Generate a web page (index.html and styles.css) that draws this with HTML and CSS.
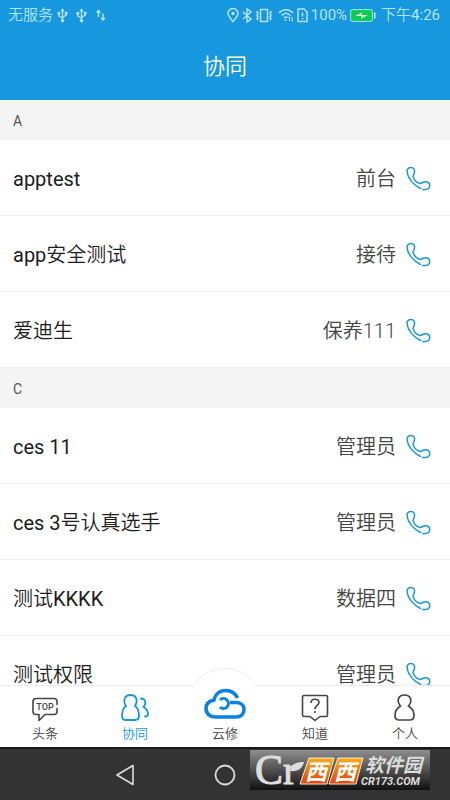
FILE: index.html
```html
<!DOCTYPE html>
<html lang="zh-CN">
<head>
<meta charset="utf-8">
<meta name="viewport" content="width=device-width, initial-scale=1">
<title>协同</title>
<link rel="stylesheet" href="styles.css">
</head>
<body>
<svg class="defs" aria-hidden="true">
  <symbol id="usb" viewBox="0 0 12 16"><g fill="none" stroke="currentColor" stroke-width="1.400"><path d="M6 13V3M6 11L2 8.500V6M6 10l4-2.500V5"/></g><g fill="currentColor"><path d="M6 0l2.500 3.500h-5z"/><circle cx="6" cy="13.800" r="1.900"/><circle cx="2" cy="5.500" r="1.700"/><path d="M8.500 4h3v3h-3z"/></g></symbol>
  <symbol id="phone" viewBox="0 0 26 26"><path d="M15.500 22.500C8.500 19 2.500 12 2 5.500C1.900 2.800 3.800 1.500 6 1.500C8.700 1.500 10 3.700 9.500 6.200C9 8.700 7.300 9.500 8.300 11.500C9.700 14.500 12 16.500 14.500 17.300C16.500 18 17.500 16 20 15.800C23 15.600 25 17.500 24.700 20C24.300 22.700 21.500 23.900 17.800 23.400" fill="none" stroke="currentColor" stroke-width="1.500" stroke-linecap="round"/></symbol>
</svg>

<header class="header">
  <div class="status">
    <span>无服务</span>
    <svg class="usb" width="11" height="15"><use href="#usb"/></svg>
    <svg class="usb" width="11" height="15"><use href="#usb"/></svg>
    <svg class="updown" width="10" height="13" viewBox="0 0 10 13" fill="none" stroke="currentColor" stroke-width="1.400"><path d="M2.500 8V1.500M.500 3.500l2-2 2 2M7 4.500V11M5 9l2 2 2-2"/></svg>
    <div class="status-right">
      <svg width="12" height="15" viewBox="0 0 12 15" fill="none" stroke="currentColor" stroke-width="1.500"><path d="M6 13.500C3 10 1 8 1 5.500a5 5 0 0 1 10 0C11 8 9 10 6 13.500z"/><circle cx="6" cy="5.500" r="1" fill="currentColor"/></svg>
      <svg width="10" height="15" viewBox="0 0 10 15" fill="none" stroke="currentColor" stroke-width="1.400"><path d="M1 4l8 7-4 3V1l4 3-8 7"/></svg>
      <svg width="18" height="15" viewBox="0 0 18 15" fill="none" stroke="currentColor" stroke-width="1.500"><path d="M5.500 1.500h7v12h-7zM3 3l-1 1.500 1 1.500-1 1.500L3 9l-1 1.500 1 1.500M15 3l1 1.500L15 6l1 1.500L15 9l1 1.500-1 1.500"/></svg>
      <svg class="wifi" width="16" height="14" viewBox="0 0 16 14" fill="none" stroke="currentColor" stroke-width="1.500"><path d="M1 5c4-4.500 10-4.500 14 0M3.500 7.500c3-3 6-3 9 0M6 10c1-1.300 2.500-1.300 3.500-.500"/><circle cx="7.500" cy="12" r="1" fill="currentColor" stroke="none"/><path d="M11.500 9v4M10.500 10l1-1.300M14 9v4M15 12l-1 1.300" stroke-width="1"/></svg>
      <svg width="11" height="15" viewBox="0 0 11 15" fill="none" stroke="currentColor" stroke-width="1.500"><path d="M1 1h6l3 3v9.500H1zM5.500 4.500v4M5.500 10v1.500"/></svg>
      <span>100%</span>
      <svg class="battery" width="26" height="13" viewBox="0 0 26 13"><rect x=".6" y=".6" width="21.800" height="11.800" rx="1.500" fill="#0ccb4d" stroke="#a5dff5"/><path d="M5 7l7-3.500-.7 2.500H18l-7 3.500.7-2.500z" fill="#eafff0"/><path d="M24 3.500h1.500v6H24z" fill="#c5eafa"/></svg>
      <span>下午4:26</span>
    </div>
  </div>
  <h1 class="title">协同</h1>
</header>

<main class="contacts">
  <section>
    <h2 class="letter">A</h2>
    <ul class="list">
      <li class="row"><span class="name">apptest</span><span class="role">前台</span><button class="call" aria-label="拨打 apptest"><svg width="26" height="26"><use href="#phone"/></svg></button></li>
      <li class="row"><span class="name">app安全测试</span><span class="role">接待</span><button class="call" aria-label="拨打 app安全测试"><svg width="26" height="26"><use href="#phone"/></svg></button></li>
      <li class="row"><span class="name">爱迪生</span><span class="role">保养111</span><button class="call" aria-label="拨打 爱迪生"><svg width="26" height="26"><use href="#phone"/></svg></button></li>
    </ul>
  </section>
  <section>
    <h2 class="letter">C</h2>
    <ul class="list">
      <li class="row"><span class="name">ces 11</span><span class="role">管理员</span><button class="call" aria-label="拨打 ces 11"><svg width="26" height="26"><use href="#phone"/></svg></button></li>
      <li class="row"><span class="name">ces 3号认真选手</span><span class="role">管理员</span><button class="call" aria-label="拨打 ces 3号认真选手"><svg width="26" height="26"><use href="#phone"/></svg></button></li>
      <li class="row"><span class="name">测试KKKK</span><span class="role">数据四</span><button class="call" aria-label="拨打 测试KKKK"><svg width="26" height="26"><use href="#phone"/></svg></button></li>
      <li class="row"><span class="name">测试权限</span><span class="role">管理员</span><button class="call" aria-label="拨打 测试权限"><svg width="26" height="26"><use href="#phone"/></svg></button></li>
    </ul>
  </section>
</main>

<nav class="tabs">
  <a class="tab" href="#"><svg width="30" height="30" viewBox="0 0 30 30" fill="none" stroke="currentColor" stroke-width="1.600" stroke-linecap="round" stroke-linejoin="round"><path d="M23 5.500H6Q3 5.500 3 8.500v10q0 3 3 3h3v6l6-6h9q3 0 3-3v-3M24 5.500q3 0 3 3v3"/><text class="top" x="15" y="17" text-anchor="middle">TOP</text></svg><span>头条</span></a>
  <a class="tab active" href="#"><svg width="30" height="30" viewBox="0 0 30 30" fill="none" stroke="currentColor" stroke-width="1.800" stroke-linecap="round"><path d="M6 13C2.500 8 4.500 2 10.500 2S18.500 8 15 13C18 15 19 19 19 23q0 4-4 4H6q-4 0-4-4c0-4 1-8 4-10zM21 5.500c4 0 6 4.500 2.500 8.500C27 16 28 19 28 21.500q0 2-3 2"/></svg><span>协同</span></a>
  <a class="tab center" href="#"><svg class="hump" width="64" height="19" viewBox="0 0 64 19"><path d="M0 18.500A37.400 37.400 0 0 1 64 18.500V19H0z" fill="#fff"/><path d="M0 18.500A37.400 37.400 0 0 1 64 18.500" fill="none" stroke="#ececec"/></svg><svg class="cloud" width="44" height="34" viewBox="0 0 44 34" fill="none" stroke="#0b82df"><path d="M34.500 11C32 6 27.500 3.500 23 3.500C16 3.500 12 8 11 13C6 14 3 17 3 21.500c0 5 4 8.500 9 8.500h21c5 0 8-3 8-7.500S37.500 15.500 33 15.500H27" stroke-width="3.600"/><path d="M17 12.800A5 5 0 1 1 17 20.200" stroke-width="3"/></svg><span>云修</span></a>
  <a class="tab" href="#"><svg width="30" height="30" viewBox="0 0 30 30" fill="none" stroke="currentColor" stroke-width="1.600" stroke-linejoin="round"><path d="M4 2.500h22q1.500 0 1.500 1.500v18q0 1.500-1.500 1.500h-6l-5 4-5-4H4q-1.500 0-1.500-1.500V4Q2.500 2.500 4 2.500zM11 10c0-5 8-5 8-.500 0 3-4 3-4 6.500M15 18v2"/></svg><span>知道</span></a>
  <a class="tab" href="#"><svg width="30" height="30" viewBox="0 0 30 30" fill="none" stroke="currentColor" stroke-width="1.700"><path d="M10.500 13C6 8 8.500 2 14.500 2s8.500 6 4 11c4 2.500 5.500 6 5.500 9.500q0 4.500-4 4.500H9q-4 0-4-4.500c0-3.500 1.500-7 5.500-9.500z"/></svg><span>个人</span></a>
</nav>

<footer class="system">
  <button class="key" aria-label="返回"><svg width="22" height="24" viewBox="0 0 22 24" fill="none" stroke="#ddd" stroke-width="1.600" stroke-linejoin="round"><path d="M19 2.500v19L3 12z"/></svg></button>
  <button class="key" aria-label="主页"><svg width="24" height="24" viewBox="0 0 24 24" fill="none" stroke="#ddd" stroke-width="1.800"><circle cx="12" cy="12" r="9.500"/></svg></button>
  <span class="key"></span>
  <svg class="brand" width="180" height="40" viewBox="0 0 180 40">
    <defs>
      <linearGradient id="plate" x2="0" y2="1"><stop stop-color="#8e8e8e"/><stop offset="1" stop-color="#111"/></linearGradient>
      <linearGradient id="orange" x2="0" y2="1"><stop stop-color="#f5ae1d"/><stop offset="1" stop-color="#df4312"/></linearGradient>
    </defs>
    <path fill="url(#plate)" d="M0 0h180v40H0z"/>
    <text class="brand-cr" x="5" y="34">Cr</text>
    <path d="M40 21c1-7 6-9 14-9-1 5-5 10-14 9z" fill="#ddd"/>
    <path d="M59 8h25l-7 26H50zM88 8h25l-7 26H79z" fill="url(#orange)" stroke="#ffe9cf"/>
    <text class="brand-x" x="55" y="30">西</text><text class="brand-x" x="84" y="30">西</text>
    <text class="brand-name" x="115" y="22">软件园</text>
    <text class="brand-url" x="111" y="35">CR173.COM</text>
  </svg>
</footer>
</body>
</html>
```
FILE: styles.css
```css
* { box-sizing: border-box; }

body {
  margin: 0;
  height: 100vh;
  display: flex;
  flex-direction: column;
  background: #fff;
  color: #1c1c1c;
  font-family: Roboto, "Noto Sans CJK SC DemiLight", "Noto Sans CJK SC", sans-serif;
}

button { padding: 0; border: 0; background: none; color: inherit; }
svg { display: block; flex: none; }
.defs { position: absolute; width: 0; height: 0; }

.header {
  flex: none;
  height: 100px;
  background: #1797dd;
  color: #fff;
}

.status {
  display: flex;
  align-items: center;
  height: 30px;
  padding: 0 10px 0 8px;
  color: #b5e4fa;
  font-size: 15px;
  line-height: 20px;
}
.usb { margin-left: 4px; margin-right: 4px; }
.updown { margin-left: 5px; }
.status-right { display: flex; align-items: center; gap: 3px; margin-left: auto; }
.wifi { margin-left: 2px; }
.battery { margin-right: 2px; }

.title {
  margin: 0;
  padding-top: 21px;
  font-size: 22px;
  line-height: 32px;
  font-weight: 350;
  text-align: center;
}

.contacts { flex: 1; min-height: 0; overflow: hidden; }

.letter {
  margin: 0;
  padding: 2px 13px 0;
  background: #f4f4f4;
  color: #555;
  font-size: 14px;
  line-height: 38px;
  font-weight: 400;
}

.list { margin: 0; padding: 0; list-style: none; }
.row {
  display: flex;
  align-items: center;
  height: 76px;
  padding: 2px 19px 0 13px;
  border-bottom: 1px solid #efefef;
  font-size: 20px;
  line-height: 30px;
}
.role { margin-left: auto; padding-top: 1px; color: #444; font-weight: 350; }
.call { margin-left: 9px; color: #1797d0; }

.tabs {
  flex: none;
  display: flex;
  height: 62px;
  border-top: 1px solid #ececec;
  background: #fff;
}
.tab {
  position: relative;
  flex: 1;
  display: flex;
  flex-direction: column;
  align-items: center;
  padding-top: 7px;
  color: #444;
  font-size: 13px;
  font-weight: 350;
  line-height: 22px;
  text-decoration: none;
}
.active { color: #1797dd; }
.center { padding-top: 1px; }
.cloud { margin-bottom: 2px; }
.hump { position: absolute; bottom: 100%; left: 50%; margin-left: -32px; margin-bottom: -1px; }
.top { font-size: 9px; font-weight: 500; fill: currentColor; stroke: none; }

.system {
  position: relative;
  flex: none;
  display: flex;
  justify-content: center;
  height: 53px;
  border-top: 2px solid #1d1a1b;
  background: #333;
}
.key { display: flex; align-items: center; justify-content: center; width: 100px; }
.brand { position: absolute; top: 1px; right: 20px; overflow: visible; font-family: Roboto, "Noto Sans CJK SC", sans-serif; }
.brand-cr { fill: #ddd; stroke: #ddd; font-family: "Liberation Serif", serif; font-size: 42px; }
.brand-x { fill: #fff; font-size: 22px; font-weight: 700; font-style: italic; }
.brand-name { fill: #ddd; font-size: 19px; font-weight: 700; font-style: italic; }
.brand-url { fill: #ddd; font-size: 11px; font-weight: 700; font-style: italic; }
```
